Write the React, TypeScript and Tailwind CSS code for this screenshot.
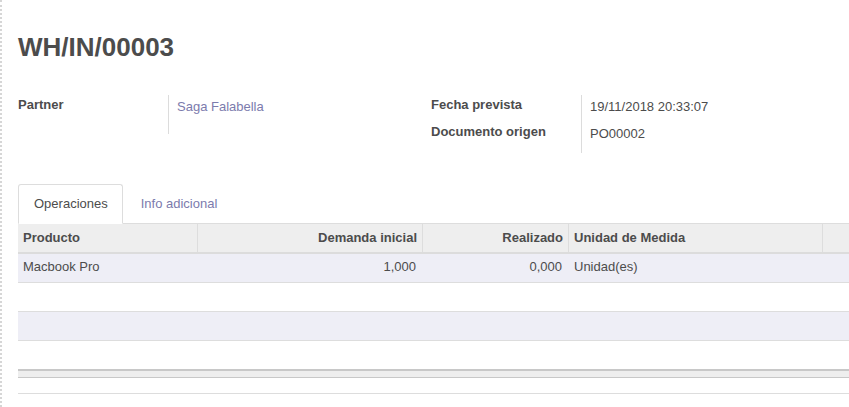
const columns = [
  { key: "product", label: "Producto", width: "w-[179px]", align: "text-left" },
  { key: "demand", label: "Demanda inicial", width: "w-[225px]", align: "text-right" },
  { key: "done", label: "Realizado", width: "w-[146px]", align: "text-right" },
  { key: "uom", label: "Unidad de Medida", width: "w-[254px]", align: "text-left" },
];

const lines = [
  { product: "Macbook Pro", demand: "1,000", done: "0,000", uom: "Unidad(es)" },
];

const App = () => {
  const rows: (typeof lines[number] | null)[] = [...lines, null, null, null];

  return (
    <div className="h-[407px] w-[849px] overflow-hidden bg-white font-['Liberation_Sans',Arial,sans-serif] text-[13px] text-[#4c4c4c]">
      <div className="h-full border-l-2 border-dotted border-[#d6d6d6] pl-4">
        <h1 className="pt-[32px] text-[26px] font-bold leading-[31px] text-[#4c4c4c]">WH/IN/00003</h1>

        {/* header fields */}
        <div className="mt-[32px] flex">
          <div className="flex w-[413px]">
            <div className="w-[150px] font-bold leading-[20px]">Partner</div>
            <div className="h-[39px] border-l border-[#dcdcdc] pl-[8px] pt-[2px] leading-[20px] text-[#7c7bad]">
              Saga Falabella
            </div>
          </div>
          <div className="flex flex-1">
            <div className="flex w-[150px] flex-col gap-[7px] font-bold leading-[20px]">
              <span>Fecha prevista</span>
              <span>Documento origen</span>
            </div>
            <div className="flex h-[58px] flex-col gap-[7px] border-l border-[#dcdcdc] pl-[8px] pt-[2px] leading-[20px]">
              <span>19/11/2018 20:33:07</span>
              <span>PO00002</span>
            </div>
          </div>
        </div>

        {/* tabs */}
        <div className="mt-[31px] flex border-b border-[#dddddd]">
          <div className="-mb-px rounded-t-[3px] border border-[#dddddd] border-b-white bg-white pl-[15px] pr-[14px] pb-[10px] pt-[10px] leading-[18px]">
            Operaciones
          </div>
          <div className="-mb-px ml-[2px] border border-transparent px-[15px] pb-[10px] pt-[10px] leading-[18px] text-[#7c7bad]">
            Info adicional
          </div>
        </div>

        {/* operations table */}
        <div className="w-[831px]">
          <div className="flex h-[30px] border-b-2 border-[#dcdcdc] bg-[#eeeeee] font-bold">
            {columns.map((c, i) => (
              <div
                key={c.key}
                className={`${c.width} ${c.align} ${i > 0 ? "border-l border-[#dddddd]" : ""} px-[5px] leading-[28px]`}
              >
                {c.label}
              </div>
            ))}
            <div className="flex-1 border-l border-[#dddddd]" />
          </div>

          {rows.map((r, i) => (
            <div
              key={i}
              className={`flex ${i < 3 ? "h-[29px] border-b border-[#dddddd]" : "h-[28px]"} ${i % 2 === 0 ? "bg-[#eeeef6]" : "bg-white"}`}
            >
              {r &&
                columns.map((c, j) => (
                  <div
                    key={c.key}
                    className={`${c.width} ${c.align} ${j > 0 ? "pl-[6px]" : "pl-[5px]"} pr-[6px] leading-[26px]`}
                  >
                    {r[c.key as keyof typeof r]}
                  </div>
                ))}
            </div>
          ))}

          <div className="h-[9px] border-b border-t-2 border-[#c8c8c8] bg-[#eeeeee]" />
          <div className="h-[16px] border-b border-[#dddddd]" />
        </div>
      </div>
    </div>
  );
};

export default App;
